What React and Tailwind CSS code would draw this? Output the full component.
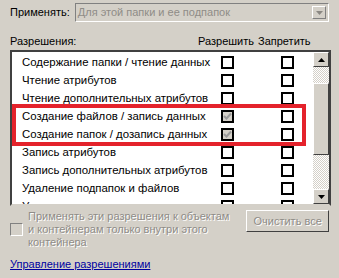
const rows = [
  { label: 'Содержание папки / чтение данных' },
  { label: 'Чтение атрибутов' },
  { label: 'Чтение дополнительных атрибутов' },
  { label: 'Создание файлов / запись данных', allow: true },
  { label: 'Создание папок / дозапись данных', allow: true },
  { label: 'Запись атрибутов' },
  { label: 'Запись дополнительных атрибутов' },
  { label: 'Удаление подпапок и файлов' },
  { label: 'Удаление' },
];

function Box({ checked }) {
  return (
    <div className={`w-[13px] h-[13px] border-2 border-black flex items-center justify-center ${checked ? 'bg-[#d4d0c8]' : 'bg-white'}`}>
      {checked && (
        <svg width="9" height="9" viewBox="0 0 9 9">
          <path d="M1 4 L3.5 6.5 L8 1.5" stroke="#9a9a9a" strokeWidth="2" fill="none" />
        </svg>
      )}
    </div>
  );
}

function Arrow({ up }) {
  return (
    <svg width="7" height="4" viewBox="0 0 7 4">
      <path d={up ? 'M0 4 L3.5 0 L7 4 Z' : 'M0 0 L7 0 L3.5 4 Z'} fill="#000" />
    </svg>
  );
}

function ScrollButton({ up }) {
  return (
    <div className="h-[15px] bg-[#d4d0c8] border border-t-white border-l-white border-b-[#404040] border-r-[#404040] flex items-center justify-center">
      <Arrow up={up} />
    </div>
  );
}

const track = 'bg-[repeating-conic-gradient(#ffffff_0_25%,#d4d0c8_0_50%)] bg-[length:2px_2px]';
const disabledText = 'text-[#8f8c87] [text-shadow:1px_1px_0_#ffffff]';

export default function App() {
  return (
    <div className="w-[339px] h-[278px] bg-[#d4d0c8] font-['Liberation_Sans',Arial,sans-serif] text-[11px] leading-[13px] text-black overflow-hidden pt-[3px] px-[10px] relative">
      <div className="flex items-center">
        <span className="w-[65px]">Применять:</span>
        <div className="w-[255px] h-[19px] border border-t-[#808080] border-l-[#808080] border-b-white border-r-white flex items-center">
          <span className="flex-1 pl-[2px] text-[#8f8c87]">Для этой папки и ее подпапок</span>
          <div className="w-[14px] h-[13px] mr-[2px] border border-t-white border-l-white border-b-[#808080] border-r-[#808080] flex items-center justify-center">
            <svg width="7" height="4" viewBox="0 0 7 4">
              <path d="M0 0 L7 0 L3.5 4 Z" fill="#8a8782" />
            </svg>
          </div>
        </div>
      </div>

      <div className="grid grid-cols-[188px_60px_60px] mt-[13px] mb-[2px]">
        <span>Разрешения:</span>
        <span>Разрешить</span>
        <span>Запретить</span>
      </div>

      <div className="w-[321px] h-[156px] border-2 border-t-[#404040] border-l-[#404040] border-b-[#d4d0c8] border-r-[#404040] bg-white flex overflow-hidden">
        <div className="w-[301px] pt-[1px] text-[11.4px]">
          {rows.map((r) => (
            <div key={r.label} className="h-[18px] grid grid-cols-[209px_60px_1fr] items-center">
              <span className="pl-[10px] whitespace-nowrap">{r.label}</span>
              <Box checked={r.allow} />
              <Box />
            </div>
          ))}
        </div>
        <div className="w-[16px] flex flex-col">
          <ScrollButton up />
          <div className={`h-[16px] ${track}`} />
          <div className="h-[72px] bg-[#d4d0c8] border border-t-white border-l-white border-b-[#404040] border-r-[#404040]" />
          <div className={`flex-1 ${track}`} />
          <ScrollButton />
        </div>
      </div>

      <div className="flex mt-[4px]">
        <div className="flex items-center w-[237px]">
          <div className="w-[13px] h-[13px] border border-t-[#808080] border-l-[#808080] border-b-white border-r-white mr-[5px]" />
          <span className={disabledText}>
            Применять эти разрешения к объектам
            <br />
            и контейнерам только внутри этого
            <br />
            контейнера
          </span>
        </div>
        <div className="w-[83px] h-[22px] border border-t-white border-l-white border-b-[#404040] border-r-[#404040] flex items-center justify-center">
          <span className={disabledText}>Очистить все</span>
        </div>
      </div>

      <div className="mt-[9px]">
        <span className="text-[#0000a0] underline">Управление разрешениями</span>
      </div>

      <div className="absolute left-[12px] top-[104px] w-[294px] h-[42px] border-4 border-[#e4222b]" />
    </div>
  );
}
